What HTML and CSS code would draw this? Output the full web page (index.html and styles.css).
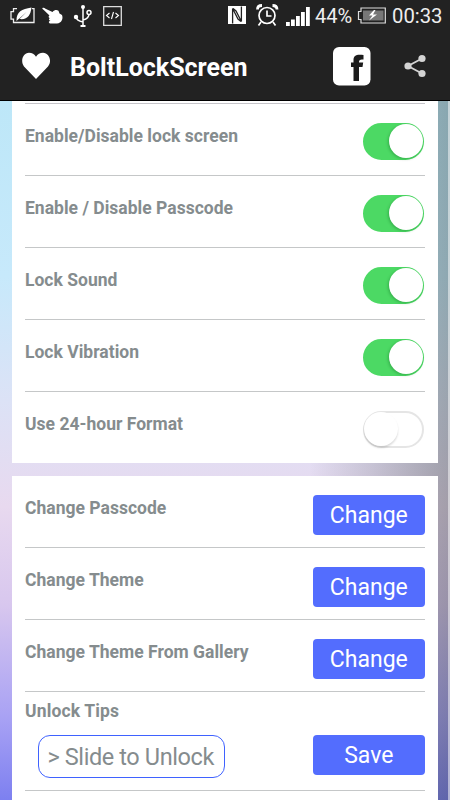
FILE: index.html
```html
<!DOCTYPE html>
<html lang="en">
<head>
<meta charset="utf-8">
<title>BoltLockScreen</title>
<link rel="stylesheet" href="styles.css">
</head>
<body>
<header class="top">
  <div class="status">
    <svg class="status-left" width="125" height="32" viewBox="0 0 125 32">
      <path d="M17 8.700h-3.500v3H11v7.500h2.500v3.300H34V8.700h-2" fill="none" stroke="#eee" stroke-width="1.300"/>
      <path d="M16.500 20c0-8 5-11 15-12.500-1 8-4 12.500-12 11.500l7-7-10 9z" fill="#fff"/>
      <path d="M42.500 8c1-.6 2 0 3 .7l7 3.300c2-2 4-2.500 6-1.200l1 2.700 2.500 1.500c1.500 4-.5 8-5 8.500h-6c-2.500 0-3-2.300-.5-2.800-2-.4-2-2-.7-2.500-1.500-.4-1.500-2-.3-2.600l-6-5.800c-1-.8-1.500-1.200-1-1.800z" fill="#fff"/>
      <g fill="none" stroke="#fff" stroke-width="1.500"><path d="M83 6v20M76 16c0 4 3 5 7 6M83 20c4-1 6-3 6-6"/><circle cx="89" cy="12.500" r="2"/></g>
      <g fill="#fff"><circle cx="83" cy="7" r="2"/><circle cx="76" cy="17" r="2.200"/><path d="M80.500 25h5v2h-5z"/></g>
      <path d="M103.700 6.700h17.600v18.600h-17.600z" fill="none" stroke="#ddd" stroke-width="1.300"/>
      <path d="M109.500 13l-3 2.500 3 2.500M115.500 13l3 2.500-3 2.500M113.500 12l-2 7" fill="none" stroke="#fff" stroke-width="1.100"/>
    </svg>
    <svg class="status-mid" width="84" height="32" viewBox="227 0 84 32">
      <path d="M228 6h18v18h-18z" fill="#fff"/>
      <path d="M232.600 23.500V8.500l5.400 10.500 3 2.500M241.400 6.500v15l-5.400-10.500-3-2.500" fill="none" stroke="#222" stroke-width="1.300"/>
      <g fill="none" stroke="#fff" stroke-width="1.700"><circle cx="267" cy="15.500" r="8"/><path d="M267 10.500v5.500h4.500M261 22l-2.500 3.500M273 22l2.500 3.500"/><path d="M257.500 9.500c0-3 2-4 4.500-4M272.500 5.500c2.500 0 4.500 1 4.500 4" stroke-width="2.800"/></g>
      <path d="M286 22h3.800v4H286zM291 19.500h3.800V26H291zM296 16h3.800v10H296zM301 12h3.800v14H301zM306 7h3.800v19H306z" fill="#fff"/>
    </svg>
    <span class="pct">44%</span>
    <svg class="battery" width="30" height="32" viewBox="357 0 30 32">
      <path d="M361 8h24.300v15H361v-3.500h-2.500v-8h2.500z" fill="none" stroke="#ddd" stroke-width="1.200"/>
      <path d="M363 10.500h20.500v10H363z" fill="#777"/>
      <path d="M374 10l-5 5.500h3.500L369 20.500l8-6h-4l2.500-4.500z" fill="#fff"/>
    </svg>
    <span class="clock">00:33</span>
  </div>
  <div class="bar">
    <svg class="heart" width="30" height="28" viewBox="0 0 30 28"><path d="M15 27L3 14.500C-1 9 2 .7 8 .7c3 0 5.500 1.500 7 4 1.500-2.500 4-4 7-4 6 0 9.500 8.300 5 13.800z" fill="#fff"/></svg>
    <h1 class="title">BoltLockScreen</h1>
    <svg class="fb" width="38" height="39" viewBox="0 0 38 39"><rect width="37.500" height="38.500" rx="6" fill="#fff"/><path d="M20.500 34V20H18v-4.500h2.500V13c0-4.500 3-6 10-5v4.500c-3.500-.3-4.500.2-4.500 3h4.200l-.7 4.500H26v14z" fill="#1c1c1c"/></svg>
    <svg class="share" width="24" height="24" viewBox="0 0 24 24"><path d="M18 4.500L4 12l14 7.500" fill="none" stroke="#d4d4d4" stroke-width="1.800"/><g fill="#d4d4d4"><circle cx="18" cy="4.500" r="3.600"/><circle cx="4" cy="12" r="3.600"/><circle cx="18" cy="19.500" r="3.600"/></g></svg>
  </div>
</header>
<main class="content">
  <section class="card toggles">
    <div class="row"><span class="label">Enable/Disable lock screen</span><span class="switch on"></span></div>
    <div class="row"><span class="label">Enable / Disable Passcode</span><span class="switch on"></span></div>
    <div class="row"><span class="label">Lock Sound</span><span class="switch on"></span></div>
    <div class="row"><span class="label">Lock Vibration</span><span class="switch on"></span></div>
    <div class="row"><span class="label">Use 24-hour Format</span><span class="switch"></span></div>
  </section>
  <section class="card actions">
    <div class="row"><span class="label">Change Passcode</span><button class="btn">Change</button></div>
    <div class="row"><span class="label">Change Theme</span><button class="btn">Change</button></div>
    <div class="row"><span class="label">Change Theme From Gallery</span><button class="btn">Change</button></div>
    <div class="row tips">
      <div class="tip-col"><span class="label">Unlock Tips</span><div class="field">&gt; Slide to Unlock</div></div>
      <button class="btn">Save</button>
    </div>
  </section>
</main>
</body>
</html>
```

FILE: styles.css
```css
* { box-sizing: border-box; }
body {
  margin: 0;
  width: 450px;
  height: 800px;
  overflow: hidden;
  display: flex;
  flex-direction: column;
  font-family: Roboto, "Liberation Sans", sans-serif;
}
.top { height: 101px; flex: none; background: #222; border-bottom: 1px solid #000; color: #fff; }
.status { height: 32px; display: flex; align-items: center; }
.status svg { flex: none; }
.status-mid { margin-left: 102px; }
.pct { width: 46px; padding-left: 4px; font-size: 20px; line-height: 34px; white-space: nowrap; color: #eee; }
.clock { padding-left: 5px; font-size: 20.3px; line-height: 34px; color: #eee; }
.bar { height: 68px; display: flex; align-items: center; }
.heart { margin-left: 20.5px; }
.title { margin: 4px 0 0 19.5px; width: 263px; font-size: 25px; line-height: 30px; font-weight: 700; }
.fb { flex: none; }
.share { margin-left: 32.5px; flex: none; }
.content {
  flex: 1;
  min-height: 0;
  overflow: hidden;
  padding: 0 12.4px;
  display: flex;
  flex-direction: column;
  gap: 13px;
  background:
    linear-gradient(90deg, transparent 448px, rgba(255,255,255,.5) 448px),
    linear-gradient(90deg, transparent 310px, rgba(55,65,65,.16) 370px, rgba(45,55,50,.34) 438px, rgba(40,50,45,.36)),
    linear-gradient(#bde7f8, #c7e9fb 25%, #dce2f6 43%, #e8d9ef 58%, #d8c7ee 72%, #a9a2f4 88%, #7d80f0);
}
.card { flex: none; padding: 0 12.6px; background: #fff; }
.toggles { height: 362px; padding-top: 2px; }
.toggles::before { content: ""; display: block; height: 1px; background: #c5c4c9; }
.actions { height: 340px; }
.row { height: 72px; display: flex; justify-content: space-between; border-bottom: 1px solid #c5c7c8; }
.toggles .row:last-child { border-bottom: 0; }
.label { padding-top: 22px; font-size: 17.5px; line-height: 21px; font-weight: 700; color: #858c8e; white-space: nowrap; letter-spacing: .02px; }
.switch { position: relative; width: 61px; height: 37px; margin: 18.5px 1px 0 0; border: 2px solid #e5e5e5; border-radius: 19px; background: #fff; }
.switch::after { content: ""; position: absolute; left: -1px; top: -1px; width: 34px; height: 34px; border-radius: 50%; background: #fff; box-shadow: 0 2px 2px rgba(0,0,0,.14); }
.switch.on { background: #4cd964; border-color: #4cd964; }
.switch.on::after { left: 24px; box-shadow: -1px 1px 3px rgba(0,80,20,.3); }
.btn { width: 112.5px; height: 40px; margin: 18.5px 0 0; padding: 0; border: 0; border-radius: 4px; background: #536dfe; color: #fff; font: 400 23px/42px Roboto, sans-serif; }
.tips { height: 99px; }
.tips .label { padding-top: 9px; letter-spacing: .15px; }
.tips .btn { margin-top: 43px; }
.tip-col { display: flex; flex-direction: column; }
.field { width: 187px; height: 43px; margin: 13px 0 0 12.7px; border: 1.5px solid #3f62ff; border-radius: 12px; padding-left: 8.8px; font-size: 23.5px; letter-spacing: -.4px; line-height: 43px; color: #858c8e; white-space: nowrap; }
```
